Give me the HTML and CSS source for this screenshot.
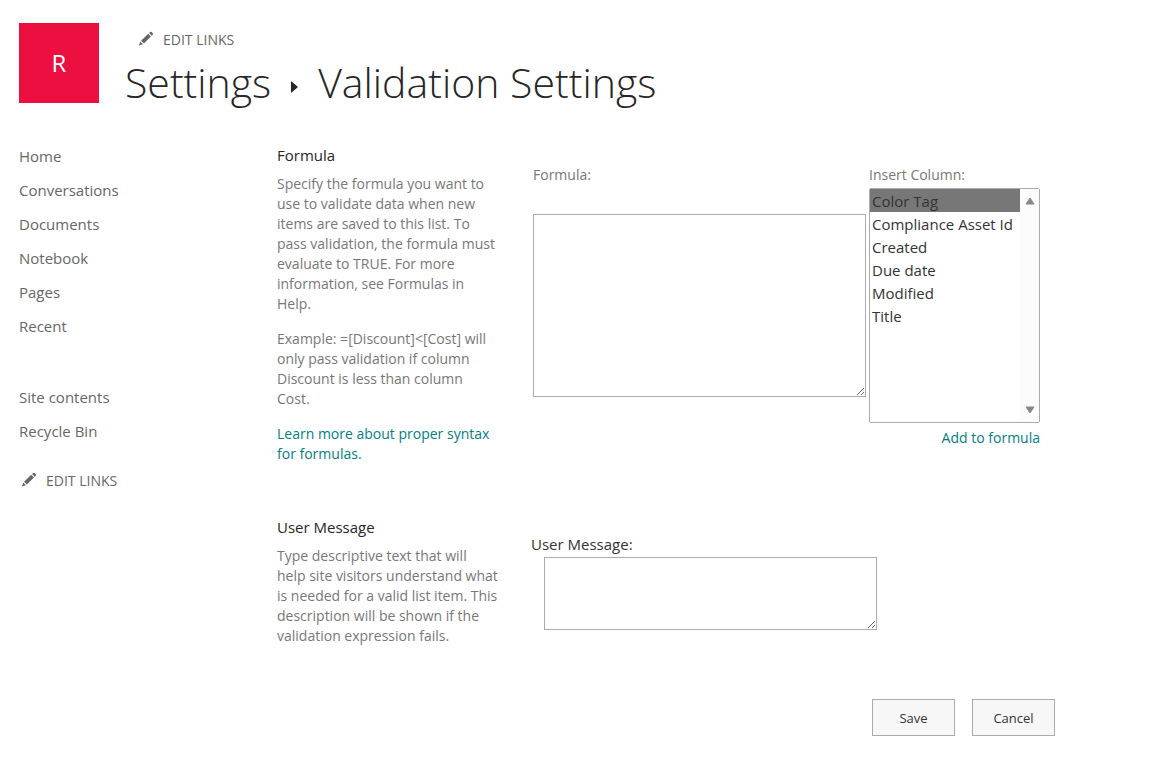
FILE: index.html
```html
<!DOCTYPE html>
<html lang="en">
<head>
<meta charset="UTF-8">
<meta name="viewport" content="width=device-width, initial-scale=1.0">
<title>Validation Settings</title>
<link rel="stylesheet" href="styles.css">
</head>
<body>
<header class="site-header">
    <a href="#" class="site-logo">R</a>
    <div class="site-heading">
        <a href="#" class="edit-links">
            <svg class="pencil" viewBox="0 0 16 16" aria-hidden="true"><path d="M0 15.500l1.300-4.200 2.800 2.800zM2.200 10.300l7.600-7.300 2.900 2.900-7.500 7.500zM10.700 2.200l1.200-1.100q.8-.7 1.600 0l1.200 1.200q.8.900 0 1.700l-1.100 1.100z"/></svg>
            EDIT LINKS
        </a>
        <h1 class="page-title">
            <a href="#">Settings</a>
            <svg class="crumb-arrow" viewBox="0 0 7 12" aria-hidden="true"><path d="M0 0l7 6-7 6z"/></svg>
            <span>Validation Settings</span>
        </h1>
    </div>
</header>
<div class="page-body">
    <nav class="side-nav">
        <ul class="nav-list">
            <li><a href="#">Home</a></li>
            <li><a href="#">Conversations</a></li>
            <li><a href="#">Documents</a></li>
            <li><a href="#">Notebook</a></li>
            <li><a href="#">Pages</a></li>
            <li><a href="#">Recent</a></li>
        </ul>
        <ul class="nav-list">
            <li><a href="#">Site contents</a></li>
            <li><a href="#">Recycle Bin</a></li>
        </ul>
        <a href="#" class="edit-links">
            <svg class="pencil" viewBox="0 0 16 16" aria-hidden="true"><path d="M0 15.500l1.300-4.200 2.800 2.800zM2.200 10.300l7.600-7.300 2.900 2.900-7.500 7.500zM10.700 2.200l1.200-1.100q.8-.7 1.600 0l1.200 1.200q.8.900 0 1.700l-1.100 1.100z"/></svg>
            EDIT LINKS
        </a>
    </nav>
    <form class="settings-form">
        <section class="form-section">
            <div class="description">
                <h2>Formula</h2>
                <p>Specify the formula you want to use to validate data when new items are saved to this list. To pass validation, the formula must evaluate to TRUE. For more information, see Formulas in Help.</p>
                <p>Example: =[Discount]&lt;[Cost] will only pass validation if column Discount is less than column<br>Cost.</p>
                <p><a href="#">Learn more about proper syntax for formulas.</a></p>
            </div>
            <div class="formula-controls">
                <div class="formula-field">
                    <label for="formula">Formula:</label>
                    <textarea id="formula" class="formula-box"></textarea>
                </div>
                <div class="column-field">
                    <label for="columns">Insert Column:</label>
                    <div class="column-picker">
                        <select id="columns" class="column-list" size="10">
                            <option selected>Color Tag</option>
                            <option>Compliance Asset Id</option>
                            <option>Created</option>
                            <option>Due date</option>
                            <option>Modified</option>
                            <option>Title</option>
                        </select>
                        <div class="scroll-track" aria-hidden="true">
                            <svg viewBox="0 0 10 8"><path d="M5 1l4 6H1z"/></svg>
                            <svg viewBox="0 0 10 8"><path d="M5 7l4-6H1z"/></svg>
                        </div>
                    </div>
                    <a href="#" class="add-link">Add to formula</a>
                </div>
            </div>
        </section>
        <section class="form-section">
            <div class="description">
                <h2>User Message</h2>
                <p>Type descriptive text that will<br>help site visitors understand what is needed for a valid list item. This description will be shown if the validation expression fails.</p>
            </div>
            <div class="message-controls">
                <label for="message">User Message:</label>
                <textarea id="message" class="message-box"></textarea>
            </div>
        </section>
        <div class="form-buttons">
            <button type="submit">Save</button>
            <button type="button">Cancel</button>
        </div>
    </form>
</div>
</body>
</html>
```
FILE: styles.css
```css
body {
    margin: 0;
    padding: 23px 19px;
    background-color: #fff;
    color: #333;
    font-family: "Segoe UI", "Open Sans", sans-serif;
    font-size: 14px;
    line-height: 20px;
}
a {
    color: inherit;
    text-decoration: none;
}
h1, h2, p, ul {
    margin: 0;
    padding: 0;
}

/* header */
.site-header {
    display: flex;
    gap: 26px;
}
.site-logo {
    display: flex;
    align-items: center;
    justify-content: center;
    width: 80px;
    height: 80px;
    background-color: #ed0f40;
    color: #fff;
    font-size: 24px;
}
.edit-links {
    display: flex;
    align-items: center;
    gap: 9px;
    color: #666;
    font-size: 14px;
}
.pencil {
    width: 15px;
    height: 15px;
    margin-bottom: 3px;
    fill: #666;
}
.site-heading .edit-links {
    padding: 7px 14px 0;
}
.page-title {
    display: flex;
    align-items: center;
    color: #262626;
    font-size: 41px;
    font-weight: 300;
    line-height: 64px;
}
.crumb-arrow {
    width: 7px;
    height: 12px;
    margin: 10px 20px 0;
    fill: #262626;
}

/* left navigation */
.page-body {
    display: flex;
    padding-top: 31px;
}
.side-nav {
    flex: none;
    width: 258px;
    padding-top: 1px;
    color: #666;
}
.nav-list {
    list-style: none;
    margin-bottom: 16px;
    font-size: 15px;
}
.nav-list + .nav-list {
    margin-top: 37px;
}
.nav-list li {
    padding-bottom: 14px;
    line-height: 20px;
}
.side-nav .edit-links {
    padding-left: 3px;
}

/* form */
.settings-form {
    flex: 1;
    max-width: 778px;
}
.form-section {
    display: flex;
    gap: 31px;
    margin-bottom: 38px;
}
.description {
    flex: none;
    width: 223px;
    color: #777;
}
.description h2 {
    margin-bottom: 9px;
    color: #262626;
    font-size: 15px;
    font-weight: 400;
    line-height: 20px;
}
.description p {
    margin-bottom: 15px;
}
.description a, .add-link {
    color: #027e82;
}
.formula-controls {
    display: flex;
    gap: 3px;
    padding: 20px 0 0 2px;
    color: #777;
}
.formula-field, .column-field, .message-controls {
    display: flex;
    flex-direction: column;
}
.formula-field {
    gap: 29px;
}
.column-field {
    gap: 3px;
}
textarea {
    box-sizing: border-box;
    width: 333px;
    margin: 0;
    border: 1px solid #ababab;
    font-family: inherit;
    font-size: 14px;
}
.formula-box {
    height: 183px;
}
.column-picker {
    position: relative;
    display: flex;
    margin-bottom: 2px;
}
.column-list {
    box-sizing: border-box;
    width: 171px;
    height: 235px;
    padding: 0 19px 0 0;
    border: 1px solid #ababab;
    border-radius: 2px;
    background-color: #fff;
    color: #333;
    font-family: inherit;
    font-size: 15px;
    overflow: hidden;
}
.column-list option {
    box-sizing: border-box;
    min-height: 23px;
    padding: 2px 2px 0;
}
.column-list option:checked {
    background: #777 linear-gradient(#777, #777);
    color: #333;
}
/* scroll arrows over the right edge of the list */
.scroll-track {
    position: absolute;
    top: 1px;
    right: 1px;
    bottom: 1px;
    width: 19px;
    box-sizing: border-box;
    padding: 8px 0;
    display: flex;
    flex-direction: column;
    align-items: center;
    justify-content: space-between;
    background-color: #fcfcfc;
    pointer-events: none;
}
.scroll-track svg {
    width: 10px;
    height: 8px;
    fill: #888;
    stroke: #888;
    stroke-linejoin: round;
}
.add-link {
    align-self: flex-end;
}
.message-controls {
    padding-top: 17px;
    font-size: 15px;
}
.message-box {
    height: 73px;
    margin: 3px 0 0 13px;
}
.form-buttons {
    display: flex;
    justify-content: flex-end;
    gap: 17px;
}
.form-buttons button {
    width: 83px;
    height: 37px;
    border: 1px solid #ababab;
    background-color: #f7f7f7;
    color: #333;
    font-family: inherit;
    font-size: 13px;
}
```
